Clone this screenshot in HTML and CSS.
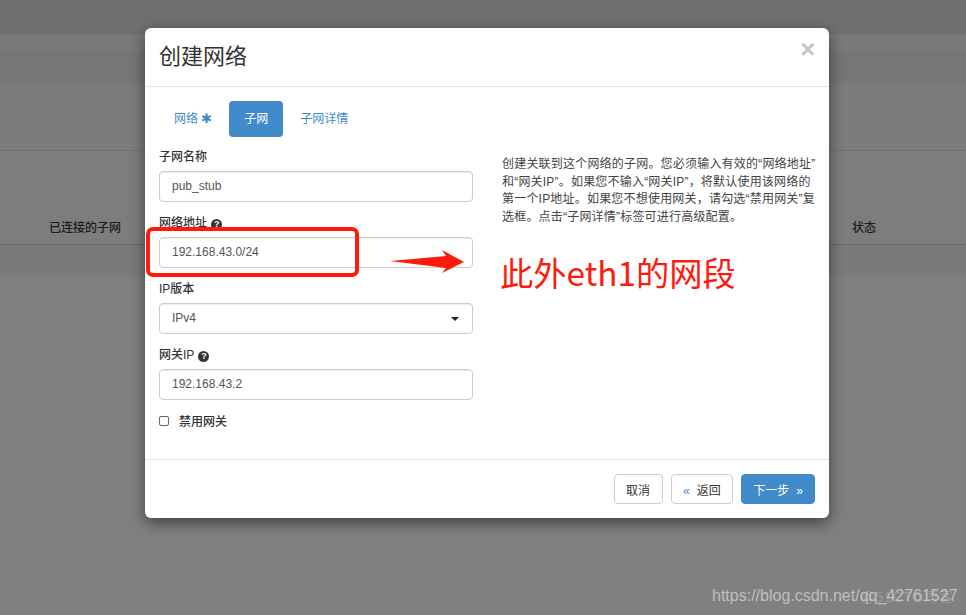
FILE: index.html
```html
<!DOCTYPE html>
<html lang="en">

<head>
  <meta charset="UTF-8" />
  <title>创建网络</title>
  <link rel="stylesheet" href="styles.css">
</head>

<body>
  <!-- page behind the dialog -->
  <div class="page">
    <div class="band band-top"></div>
    <div class="band band-light"></div>
    <div class="band band-dark"></div>
    <div class="band band-info"></div>
    <div class="table-head">
      <span>已连接的子网</span>
      <span>状态</span>
    </div>
    <div class="band band-row"></div>
  </div>

  <div class="modal">
    <div class="modal-header">
      <h4>创建网络</h4>
      <span class="close">&times;</span>
    </div>
    <div class="modal-body">
      <ul class="tabs">
        <li>网络 <span class="star">&#10033;</span></li>
        <li class="current">子网</li>
        <li>子网详情</li>
      </ul>
      <div class="columns">
        <div class="form">
          <div class="field">
            <label>子网名称</label>
            <div class="input">pub_stub</div>
          </div>
          <div class="field">
            <label>网络地址 <i class="help">?</i></label>
            <div class="input">192.168.43.0/24</div>
          </div>
          <div class="field">
            <label>IP版本</label>
            <div class="input select">IPv4<b class="caret"></b></div>
          </div>
          <div class="field">
            <label>网关IP <i class="help">?</i></label>
            <div class="input">192.168.43.2</div>
          </div>
          <div class="check"><span class="box"></span>禁用网关</div>
        </div>
        <p class="help-text">创建关联到这个网络的子网。您必须输入有效的“网络地址”<br>和“网关IP”。如果您不输入“网关IP”，将默认使用该网络的<br>第一个IP地址。如果您不想使用网关，请勾选“禁用网关”复<br>选框。点击“子网详情”标签可进行高级配置。</p>
      </div>
    </div>
    <div class="modal-footer">
      <button class="btn">取消</button>
      <button class="btn"><span class="quo">&laquo;</span>返回</button>
      <button class="btn primary">下一步<span class="quo after">&raquo;</span></button>
    </div>
  </div>

  <!-- red marks drawn on top of the screenshot -->
  <div class="mark-box"></div>
  <svg class="mark-arrow" width="80" height="30" viewBox="0 0 80 30">
    <polygon points="0,15 56,10 52,4 74,16 52,27 56,22" fill="#ff1a0d" />
  </svg>
  <div class="mark-text">此外eth1的网段</div>
  <div class="watermark">https://blog.csdn.net/qq_42761527</div>
  <div class="watermark ghost">@51CTO博客</div>
</body>

</html>
```

FILE: styles.css
```css
* {
  padding: 0;
  margin: 0;
  list-style: none;
  box-sizing: border-box;
}

html,
body {
  height: 100%;
  overflow: hidden;
}

body {
  background: #808080;
  font-family: "Liberation Sans", "Noto Sans CJK SC", sans-serif;
  font-size: 12px;
  color: #333;
}

.band {
  border-bottom: 1px solid #6c6c6c;
}

.band-top {
  height: 34px;
  background: #707070;
}

.band-light {
  height: 17px;
  background: #7a7a7a;
  border: 0;
}

.band-dark {
  height: 32px;
  background: #767676;
  border: 0;
}

.band-info {
  height: 68px;
  background: #7c7c7c;
  border-color: #727272;
}

.table-head {
  height: 94px;
  padding: 67px 90px 0 49px;
  display: flex;
  justify-content: space-between;
  background: #7d7d7d;
  border-bottom: 1px solid #6c6c6c;
  color: #1c1c1c;
  font-weight: 500;
}

.band-row {
  height: 31px;
  background: #7a7a7a;
  border: 0;
}

.modal {
  position: absolute;
  left: 145px;
  top: 28px;
  width: 684px;
  height: 490px;
  display: flex;
  flex-direction: column;
  background: #fff;
  border-radius: 6px;
  box-shadow: 0 5px 15px rgba(0, 0, 0, 0.5);
}

.modal-header {
  height: 59px;
  padding: 14px 14px 0;
  display: flex;
  justify-content: space-between;
  border-bottom: 1px solid #e5e5e5;
}

.modal-header h4 {
  font-size: 22px;
  font-weight: normal;
  line-height: 30px;
}

.close {
  font-size: 25px;
  font-weight: bold;
  line-height: 14px;
  color: #c4c4c4;
}

.modal-body {
  flex: 1;
  padding: 14px 14px 0;
}

.tabs {
  display: flex;
  height: 36px;
  margin-bottom: 12px;
}

.tabs li {
  padding: 0 15px;
  line-height: 36px;
  color: #428bca;
  border-radius: 4px;
  margin-right: 2px;
}

.tabs li.current {
  background: #428bca;
  color: #fff;
}

.star {
  font-size: 13px;
}

.columns {
  display: flex;
}

.form {
  width: 314px;
  flex-shrink: 0;
}

.field {
  margin-bottom: 13px;
}

.field label {
  display: block;
  height: 22px;
  line-height: 17px;
  font-weight: 500;
}

.input {
  position: relative;
  height: 31px;
  padding: 0 12px;
  line-height: 29px;
  border: 1px solid #ccc;
  border-radius: 4px;
  color: #555;
  box-shadow: inset 0 1px 1px rgba(0, 0, 0, 0.075);
}

.caret {
  position: absolute;
  right: 13px;
  top: 13px;
  border-top: 4px solid #222;
  border-left: 4px solid transparent;
  border-right: 4px solid transparent;
}

.help {
  display: inline-block;
  width: 11px;
  height: 11px;
  margin-left: 1px;
  border-radius: 50%;
  background: #333;
  color: #fff;
  font-size: 9px;
  font-style: normal;
  font-weight: bold;
  line-height: 11px;
  text-align: center;
  vertical-align: 0;
}

.check {
  display: flex;
  align-items: center;
  font-weight: 500;
  margin-top: -1px;
}

.box {
  width: 10px;
  height: 10px;
  margin-right: 10px;
  border: 1px solid #666;
  border-radius: 2px;
}

.help-text {
  flex-shrink: 0;
  margin: 7px 0 0 29px;
  line-height: 17.7px;
  letter-spacing: 0.2px;
  white-space: nowrap;
  color: #444;
}

.modal-footer {
  height: 59px;
  padding-top: 14px;
  padding-right: 14px;
  display: flex;
  justify-content: flex-end;
  gap: 8px;
  border-top: 1px solid #e5e5e5;
}

.btn {
  height: 30px;
  padding: 0 11.5px;
  background: #fff;
  border: 1px solid #ccc;
  border-radius: 4px;
  font-family: inherit;
  font-size: 12px;
  color: #333;
}

.btn.primary {
  padding: 0 11px;
  background: #428bca;
  border-color: #428bca;
  color: #fff;
}

.quo {
  margin-right: 7px;
  color: #428bca;
}

.quo.after {
  margin: 0 0 0 7px;
  color: #fff;
}

.mark-box {
  position: absolute;
  left: 146px;
  top: 227px;
  width: 213px;
  height: 50px;
  border: 4px solid #ff1a0d;
  border-radius: 7px;
}

.mark-arrow {
  position: absolute;
  left: 390px;
  top: 246px;
}

.mark-text {
  position: absolute;
  left: 500px;
  top: 250px;
  font-family: "Noto Sans CJK SC", sans-serif;
  font-size: 33.3px;
  line-height: 44px;
  color: #ff1a0d;
}

.watermark {
  position: absolute;
  left: 712px;
  top: 585px;
  font-size: 16px;
  line-height: 22px;
  color: rgba(255, 255, 255, 0.5);
}

.watermark.ghost {
  left: 860px;
  top: 586px;
  font-size: 15px;
  color: rgba(255, 255, 255, 0.2);
}
```
